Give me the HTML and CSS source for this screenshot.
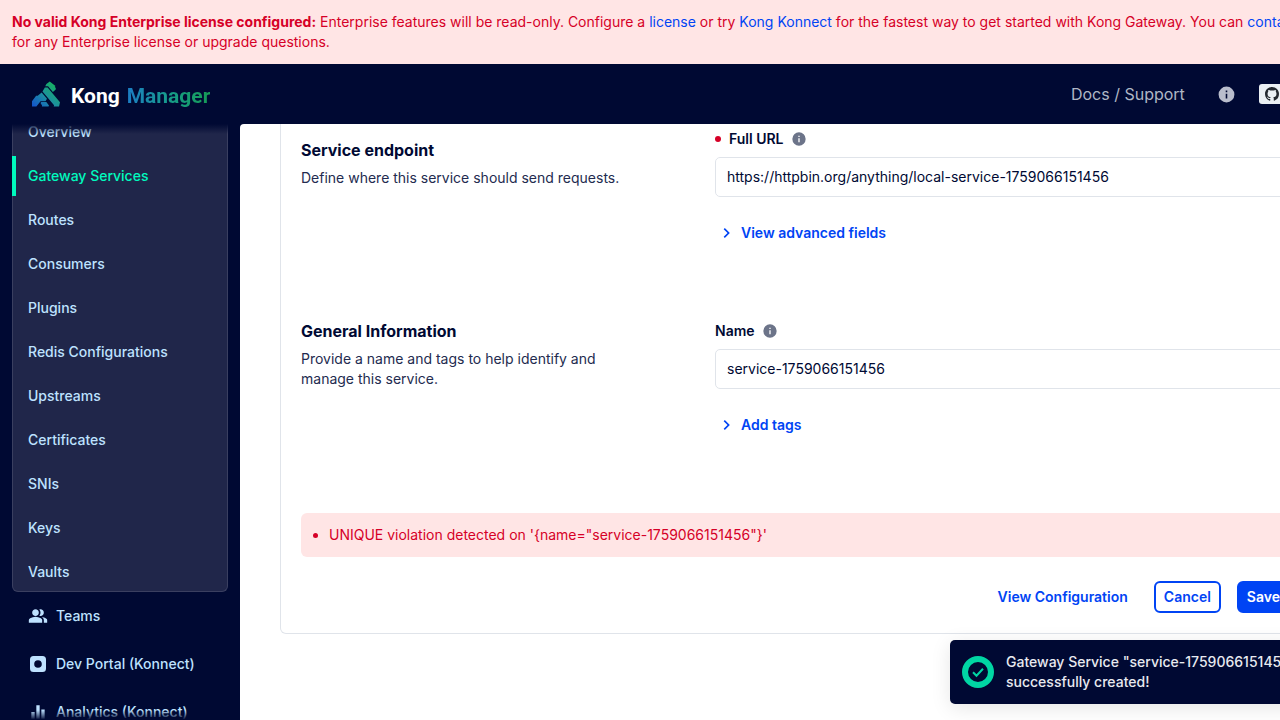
FILE: index.html
```html
<!DOCTYPE html>
<html lang="en">
<head>
<meta charset="utf-8">
<title>Kong Manager</title>
<link rel="stylesheet" href="styles.css">
</head>
<body>
<svg class="defs" aria-hidden="true">
  <symbol id="icon-info" viewBox="0 0 24 24"><path d="M12 2a10 10 0 1 0 0 20 10 10 0 0 0 0-20Zm1 15h-2v-6h2Zm0-8h-2V7h2Z"/></symbol>
  <symbol id="icon-chevron" viewBox="0 0 24 24"><path d="M9.4 18 8 16.6l4.6-4.6L8 7.4 9.4 6l6 6Z"/></symbol>
</svg>
<div class="page">
  <div class="banner">
    <strong>No valid Kong Enterprise license configured:</strong> Enterprise features will be read-only. Configure a <a href="#">license</a> or try <a href="#">Kong Konnect</a> for the fastest way to get started with Kong Gateway. You can <a href="#">contact us</a><br>for any Enterprise license or upgrade questions.
  </div>

  <header class="header">
    <a class="brand" href="#">
      <svg class="brand-mark" viewBox="0 1 24 22" aria-hidden="true">
        <defs><linearGradient id="mark" gradientUnits="userSpaceOnUse" x1="1" y1="22" x2="18" y2="3"><stop offset="0" stop-color="#1456cb"/><stop offset="0.5" stop-color="#1c8fa0"/><stop offset="1" stop-color="#16b062"/></linearGradient></defs>
        <path fill="url(#mark)" d="M7.88 18.96h4.405l2.286 2.876-.393.979h-5.69l.139-.979-1.341-2.117.594-.759Zm3.152-12.632 2.36-.004L24 18.97l-.824 3.845h-4.547l.283-1.083L9 9.912l2.032-3.584Zm4.17-5.144 4.932 3.876-.632.651.855 1.191v1.273l-2.458 2.004-4.135-4.884h-2.407l.969-1.777 2.876-2.334ZM4.852 13.597l3.44-2.989 4.565 5.494-1.296 2.012h-4.21l-2.912 3.822-.665.879H0v-4.689l3.517-4.529h1.335Z"/>
      </svg>
      <span class="brand-name"><span>Kong</span> <span class="brand-product">Manager</span></span>
    </a>
    <div class="header-actions">
      <a class="docs" href="#">Docs / Support</a>
      <button class="icon-button" type="button" aria-label="Information"><svg class="icon"><use href="#icon-info"/></svg></button>
      <a class="star" href="#">
        <svg class="star-icon" viewBox="0 0 16 16" aria-hidden="true"><path d="M8 0C3.58 0 0 3.58 0 8c0 3.54 2.29 6.53 5.47 7.59.4.07.55-.17.55-.38 0-.19-.01-.82-.01-1.49-2.01.37-2.53-.49-2.69-.94-.09-.23-.48-.94-.82-1.13-.28-.15-.68-.52-.01-.53.63-.01 1.08.58 1.23.82.72 1.21 1.87.87 2.33.66.07-.52.28-.87.51-1.07-1.78-.2-3.64-.89-3.64-3.95 0-.87.31-1.59.82-2.15-.08-.2-.36-1.02.08-2.12 0 0 .67-.21 2.2.82.64-.18 1.32-.27 2-.27s1.36.09 2 .27c1.53-1.04 2.2-.82 2.2-.82.44 1.1.16 1.92.08 2.12.51.56.82 1.27.82 2.15 0 3.07-1.87 3.75-3.65 3.95.29.25.54.73.54 1.48 0 1.07-.01 1.93-.01 2.2 0 .21.15.46.55.38A8.01 8.01 0 0 0 16 8c0-4.42-3.58-8-8-8Z"/></svg>
        Star
      </a>
    </div>
  </header>

  <div class="body">
    <nav class="sidebar">
      <ul class="nav-group">
        <li><a class="nav-link" href="#">Overview</a></li>
        <li><a class="nav-link active" href="#">Gateway Services</a></li>
        <li><a class="nav-link" href="#">Routes</a></li>
        <li><a class="nav-link" href="#">Consumers</a></li>
        <li><a class="nav-link" href="#">Plugins</a></li>
        <li><a class="nav-link" href="#">Redis Configurations</a></li>
        <li><a class="nav-link" href="#">Upstreams</a></li>
        <li><a class="nav-link" href="#">Certificates</a></li>
        <li><a class="nav-link" href="#">SNIs</a></li>
        <li><a class="nav-link" href="#">Keys</a></li>
        <li><a class="nav-link" href="#">Vaults</a></li>
      </ul>
      <ul class="nav-main">
        <li><a class="nav-link" href="#"><svg class="icon" viewBox="0 0 24 24" aria-hidden="true"><path d="M1 20v-2.8q0-.85.438-1.563.437-.712 1.162-1.087 1.55-.775 3.15-1.163Q7.35 13 9 13t3.25.387 3.15 1.163q.725.375 1.162 1.087Q17 16.35 17 17.2V20Zm18 0v-3q0-1.1-.613-2.113-.612-1.012-1.737-1.737 1.275.15 2.4.512 1.125.363 2.1.888.9.5 1.375 1.112Q23 16.275 23 17v3ZM9 12q-1.65 0-2.825-1.175Q5 9.65 5 8t1.175-2.825Q7.35 4 9 4t2.825 1.175Q13 6.35 13 8t-1.175 2.825Q10.65 12 9 12Zm10-4q0 1.65-1.175 2.825Q16.65 12 15 12q-.275 0-.7-.062-.425-.063-.7-.138.675-.8 1.037-1.775Q15 9.05 15 8t-.363-2.025Q14.275 5 13.6 4.2q.35-.125.7-.163Q14.65 4 15 4q1.65 0 2.825 1.175Q19 6.35 19 8Z"/></svg>Teams</a></li>
        <li><a class="nav-link" href="#"><svg class="icon" viewBox="0 0 20 20" aria-hidden="true"><path fill-rule="evenodd" d="M5.500 2h9A3.500 3.500 0 0 1 18 5.500v9a3.500 3.500 0 0 1-3.500 3.500h-9A3.500 3.500 0 0 1 2 14.500v-9A3.500 3.500 0 0 1 5.500 2ZM10 6.200a3.800 3.800 0 1 0 0 7.600 3.800 3.800 0 0 0 0-7.600Z"/></svg>Dev Portal (Konnect)</a></li>
        <li><a class="nav-link" href="#"><svg class="icon" viewBox="0 0 24 24" aria-hidden="true"><path d="M4 20v-8h4v8Zm6 0V4h4v16Zm6 0V9h4v11Z"/></svg>Analytics (Konnect)</a></li>
      </ul>
    </nav>

    <main class="content">
      <form class="card">
        <section class="section">
          <div class="section-info section-info-pinned">
            <h2>Service endpoint</h2>
            <p>Define where this service should send requests.</p>
          </div>
          <div class="section-fields">
            <div class="label-row"><label class="required" for="url">Full URL</label><svg class="label-icon" aria-hidden="true"><use href="#icon-info"/></svg></div>
            <input class="text-input" id="url" type="text" value="https://httpbin.org/anything/local-service-1759066151456">
            <button class="expand" type="button"><svg class="icon" aria-hidden="true"><use href="#icon-chevron"/></svg>View advanced fields</button>
          </div>
        </section>
        <section class="section">
          <div class="section-info">
            <h2>General Information</h2>
            <p>Provide a name and tags to help identify and manage this service.</p>
          </div>
          <div class="section-fields">
            <div class="label-row"><label for="name">Name</label><svg class="label-icon" aria-hidden="true"><use href="#icon-info"/></svg></div>
            <input class="text-input" id="name" type="text" value="service-1759066151456">
            <button class="expand" type="button"><svg class="icon" aria-hidden="true"><use href="#icon-chevron"/></svg>Add tags</button>
          </div>
        </section>
        <ul class="alert" role="alert"><li>UNIQUE violation detected on '{name="service-1759066151456"}'</li></ul>
        <div class="actions">
          <button class="button" type="button">View Configuration</button>
          <button class="button outlined" type="button">Cancel</button>
          <button class="button primary" type="submit">Save</button>
        </div>
      </form>
    </main>
  </div>

  <div class="toast" role="status">
    <span class="toast-badge"><svg viewBox="0 0 16 16" aria-hidden="true"><path d="m3 8.200 3.500 3.500 6.500-7"/></svg></span>
    <p>Gateway Service "service-1759066151456" successfully created!</p>
  </div>
</div>
</body>
</html>
```
FILE: styles.css
```css
* { box-sizing: border-box; }

body {
  margin: 0;
  overflow: hidden;
  background: #fff;
  color: #000933;
  font: 400 14px/20px Inter, "Liberation Sans", sans-serif;
}

ul, h2, p { margin: 0; padding: 0; }
a { color: #0044f4; text-decoration: none; }
button { font: inherit; cursor: pointer; }

.defs { position: absolute; width: 0; height: 0; }
.icon { width: 20px; height: 20px; flex: none; fill: currentColor; }

.page {
  position: relative;
  display: flex;
  flex-direction: column;
  min-width: 1351px;
  height: 100vh;
}

.banner {
  padding: 12px;
  background: #ffe5e5;
  color: #d60027;
}

.header {
  display: flex;
  align-items: center;
  height: 60px;
  flex: none;
  padding: 0 40px 0 32px;
  background: #000933;
}
.brand { display: flex; align-items: center; gap: 11px; }
.brand-mark { width: 28px; height: 26px; }
.brand-name {
  display: flex;
  gap: 7px;
  padding-top: 3px;
  color: #fff;
  font: 700 21px/28px Roboto, sans-serif;
}
.brand-product {
  background: linear-gradient(90deg, #1c7dc4, #169c8b 50%, #169b55);
  background-clip: text;
  color: transparent;
}
.header-actions {
  display: flex;
  align-items: center;
  margin-left: auto;
}
.docs { color: #afb7c5; font-size: 16px; line-height: 24px; }
.icon-button {
  display: flex;
  margin: 0 23px 0 32px;
  padding: 0;
  border: 0;
  background: none;
  color: #b9bdcc;
}
.icon-button .icon { width: 19px; height: 19px; }
.star {
  display: flex;
  align-items: center;
  gap: 4px;
  height: 20px;
  padding: 0 6px;
  border-radius: 3px;
  background: #ebf0f4;
  color: #24292f;
  font-size: 11px;
  font-weight: 700;
}
.star-icon { width: 14px; height: 14px; fill: currentColor; }

.body {
  display: flex;
  flex: 1;
  min-height: 0;
  background: #000933;
}

.sidebar {
  position: relative;
  width: 240px;
  flex: none;
  overflow: hidden;
  padding: 0 12px;
}
.sidebar::before, .sidebar::after {
  content: "";
  position: absolute;
  left: 0;
  right: 0;
  height: 10px;
  z-index: 1;
}
.sidebar::before { top: 0; background: linear-gradient(#000933, transparent); }
.sidebar::after { bottom: 0; background: linear-gradient(transparent, #000933); }
.sidebar ul { display: flex; flex-direction: column; list-style: none; }
.nav-group {
  gap: 4px;
  margin-top: -12px;
  border: 1px solid #3a3f60;
  border-top: 0;
  border-radius: 6px;
  background: #20264a;
}
.nav-group li:last-child { margin-bottom: -1px; }
.nav-main { gap: 8px; padding-top: 4px; }
.nav-link {
  display: flex;
  align-items: center;
  gap: 8px;
  height: 40px;
  padding: 0 16px;
  color: #bee2ff;
  font-weight: 500;
}
.nav-group .nav-link { padding: 0 15px; }
.nav-group .active {
  margin-left: -1px;
  padding-left: 12px;
  border-left: 4px solid #00fabe;
  color: #00fabe;
}

.content {
  flex: 1;
  overflow: hidden;
  padding: 0 40px;
  border-top-left-radius: 4px;
  background: #fff;
}
.card {
  display: flex;
  flex-direction: column;
  padding: 3px 20px 20px;
  border: 1px solid #e0e4ea;
  border-top: 0;
  border-radius: 0 0 6px 6px;
}
.section {
  display: grid;
  grid-template-columns: 334px 1fr;
  gap: 80px;
  margin-bottom: 70px;
}
.section-info { display: flex; flex-direction: column; gap: 6px; }
.section-info-pinned { padding-top: 11px; }
.section-info h2 { font-size: 16px; line-height: 24px; font-weight: 700; }
.section-info p { color: #232b4f; }
.section-fields {
  display: flex;
  flex-direction: column;
  align-items: flex-start;
  padding-top: 2px;
}
.label-row {
  display: flex;
  align-items: center;
  gap: 7px;
  margin-bottom: 8px;
  font-weight: 600;
}
.label-icon { width: 16px; height: 16px; fill: #6c7489; }
.required { display: flex; align-items: center; gap: 8px; }
.required::before {
  content: "";
  width: 6px;
  height: 6px;
  border-radius: 50%;
  background: #d60027;
}
.text-input {
  width: 100%;
  height: 40px;
  padding: 0 11px 1px;
  border: 1px solid #e0e4ea;
  border-radius: 5px;
  background: #fff;
  color: #000933;
  font: inherit;
}
.expand {
  display: flex;
  align-items: center;
  gap: 4px;
  height: 32px;
  margin-top: 20px;
  padding: 0 2px;
  border: 0;
  background: none;
  color: #0044f4;
  font-weight: 600;
}

.alert {
  margin-top: 2px;
  padding: 12px 16px 12px 28px;
  border-radius: 6px;
  background: #ffe5e5;
  color: #d60027;
}

.actions {
  display: flex;
  justify-content: flex-end;
  gap: 16px;
  margin-top: 24px;
}
.button {
  height: 32px;
  padding: 0 8px;
  border: 2px solid transparent;
  border-radius: 6px;
  background: none;
  color: #0044f4;
  font-weight: 600;
}
.outlined { border-color: #0044f4; }
.primary { background: #0044f4; border-color: #0044f4; color: #fff; }

.toast {
  position: absolute;
  right: 1px;
  bottom: 16px;
  display: flex;
  align-items: center;
  gap: 12px;
  width: 400px;
  padding: 12px;
  border-radius: 5px;
  background: #000933;
  color: #e8eaf0;
  font-weight: 500;
  box-shadow: 0 4px 20px rgba(0, 0, 0, 0.1);
}
.toast-badge {
  display: flex;
  align-items: center;
  justify-content: center;
  width: 32px;
  height: 32px;
  flex: none;
  border: 6px solid #00d6a4;
  border-radius: 50%;
}
.toast-badge svg {
  width: 16px;
  height: 16px;
  flex: none;
  fill: none;
  stroke: #00d6a4;
  stroke-width: 2;
}
```
